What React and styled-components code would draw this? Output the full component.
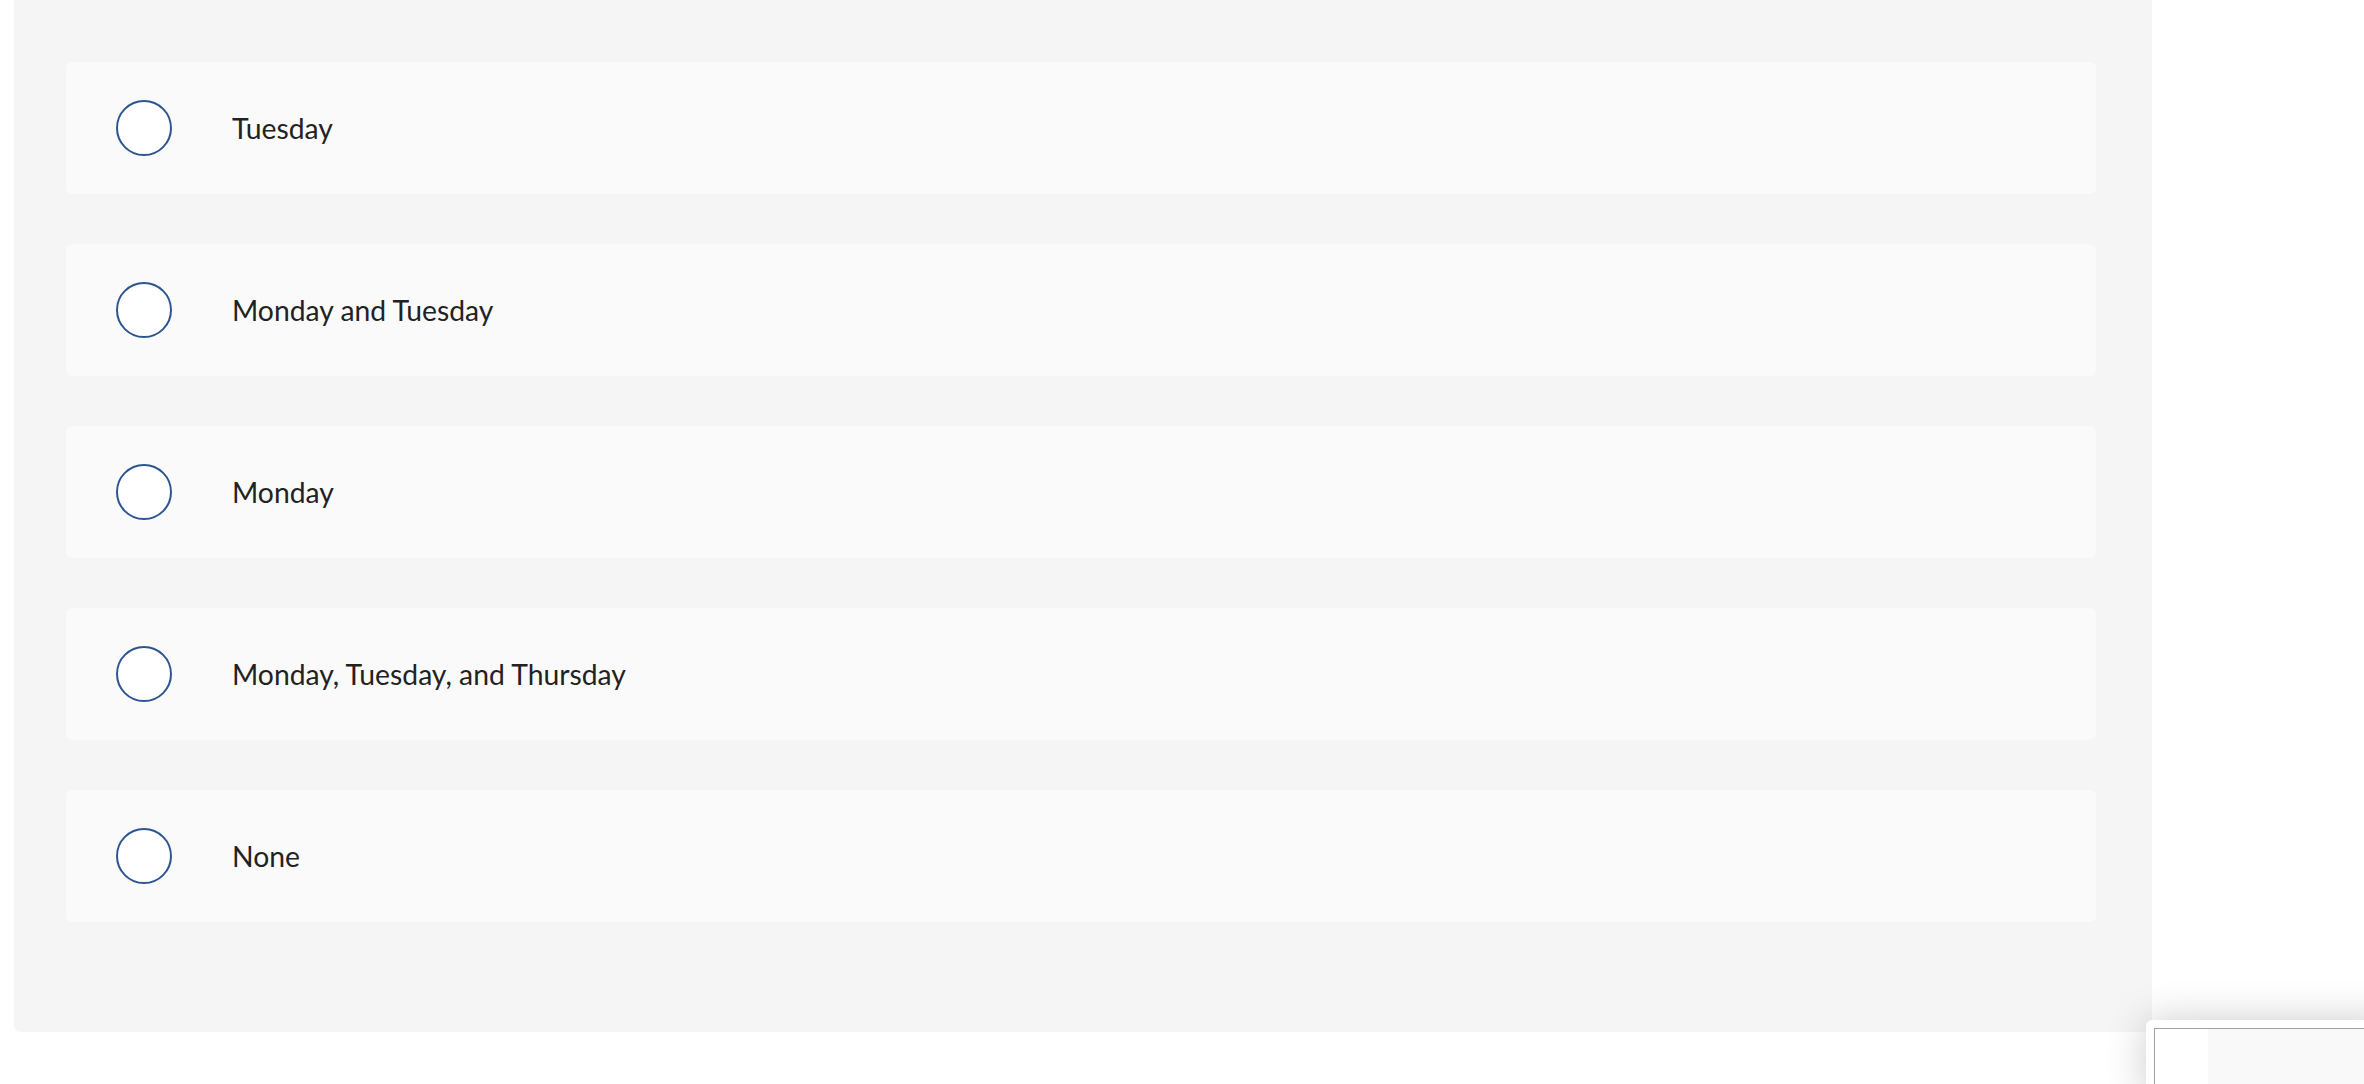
import React from 'react'
import styled, { createGlobalStyle } from 'styled-components'

const GlobalStyle = createGlobalStyle`
  html, body {
    margin: 0;
    padding: 0;
    background: #fff;
    overflow: hidden;
  }
  body {
    font-family: Lato, "Open Sans", "Liberation Sans", sans-serif;
    color: #222;
  }
`

const Panel = styled.div`
  margin-left: 14px;
  width: 2138px;
  box-sizing: border-box;
  background: #f5f5f5;
  border-radius: 0 0 6px 6px;
  padding: 62px 56px 110px 52px;
`

const Choices = styled.ul`
  list-style: none;
  margin: 0;
  padding: 0;
  display: flex;
  flex-direction: column;
  gap: 50px;
`

const Choice = styled.li`
  display: flex;
  align-items: center;
  height: 132px;
  padding-left: 50px;
  background: #fafafa;
  border-radius: 6px;
  cursor: pointer;
`

const Radio = styled.span`
  flex: 0 0 auto;
  width: 56px;
  height: 56px;
  box-sizing: border-box;
  border-radius: 50%;
  border: 2px solid #2c5591;
  background: #fff;
`

const Label = styled.span`
  margin-left: 60px;
  font-size: 28.3px;
  line-height: 1;
  color: #222;
`

// recaptcha-ish badge peeking in at the bottom right corner
const Badge = styled.div`
  position: fixed;
  right: -38px;
  bottom: -16px;
  width: 256px;
  height: 80px;
  box-sizing: border-box;
  padding: 8px;
  background: #fff;
  border-radius: 6px 0 0 0;
  box-shadow: 0 0 40px rgba(0, 0, 0, 0.2);
`

const BadgeInner = styled.div`
  display: flex;
  height: 100%;
  border: 1px solid #a0a0a0;
  border-right: none;
  border-bottom: none;
`

const BadgeLogo = styled.div`
  width: 53px;
  background: #fff;
`

const BadgeText = styled.div`
  flex: 1;
  background: #f9f9f9;
`

const options = [
  'Tuesday',
  'Monday and Tuesday',
  'Monday',
  'Monday, Tuesday, and Thursday',
  'None',
]

const App = () => {
  return (
    <>
      <GlobalStyle />
      <Panel>
        <Choices>
          {options.map(o => (
            <Choice key={o}>
              <Radio />
              <Label>{o}</Label>
            </Choice>
          ))}
        </Choices>
      </Panel>
      <Badge>
        <BadgeInner>
          <BadgeLogo />
          <BadgeText />
        </BadgeInner>
      </Badge>
    </>
  )
}

export default App
